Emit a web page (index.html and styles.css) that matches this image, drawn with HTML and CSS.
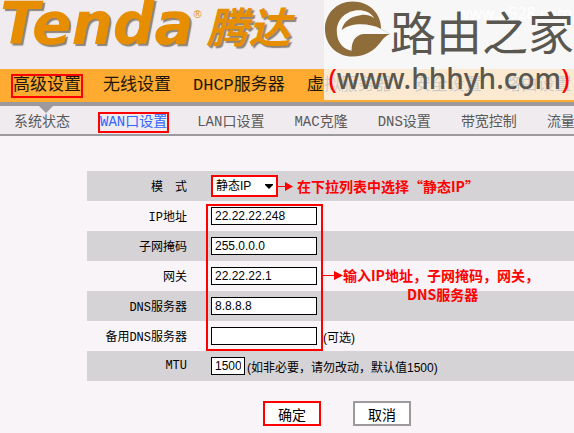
FILE: index.html
```html
<!DOCTYPE html>
<html lang="zh-CN">
<head>
  <meta charset="UTF-8">
  <meta name="viewport" content="width=device-width, initial-scale=1.0">
  <title>Tenda 腾达 - WAN口设置</title>
  <link rel="stylesheet" href="styles.css">
</head>
<body>
  <header class="header">
    <span class="logo">Tenda</span>
    <span class="logo-reg">®</span>
    <span class="logo-cn">腾达</span>
  </header>

  <nav class="main-nav">
    <a href="#" class="current">高级设置</a>
    <a href="#">无线设置</a>
    <a href="#">DHCP服务器</a>
    <a href="#">虚拟服务器</a>
    <a href="#">安全设置</a>
    <a href="#">路由设置</a>
  </nav>

  <nav class="sub-nav">
    <a href="#">系统状态</a>
    <a href="#" class="current">WAN口设置</a>
    <a href="#">LAN口设置</a>
    <a href="#">MAC克隆</a>
    <a href="#">DNS设置</a>
    <a href="#">带宽控制</a>
    <a href="#">流量</a>
  </nav>

  <form class="wan-form">
    <div class="row shaded">
      <label for="mode">模　式</label>
      <div class="select-box">
        <select id="mode" name="mode">
          <option selected>静态IP</option>
          <option>动态IP</option>
          <option>PPPoE</option>
        </select>
        <svg class="caret" width="8" height="5" viewBox="0 0 8 5"><path d="M0 0h8v1L4 5 0 1z"/></svg>
      </div>
      <div class="tip mode-tip">
        <svg width="15" height="9" viewBox="0 0 15 9"><path d="M0 4h7V0l8 4.5L7 9V5H0z"/></svg>
        <span>在下拉列表中选择“静态IP”</span>
      </div>
    </div>

    <div class="address">
      <div class="row">
        <label for="ip">IP地址</label>
        <input type="text" id="ip" name="ip" value="22.22.22.248">
      </div>
      <div class="row shaded">
        <label for="mask">子网掩码</label>
        <input type="text" id="mask" name="mask" value="255.0.0.0">
      </div>
      <div class="row">
        <label for="gateway">网关</label>
        <input type="text" id="gateway" name="gateway" value="22.22.22.1">
      </div>
      <div class="row shaded">
        <label for="dns1">DNS服务器</label>
        <input type="text" id="dns1" name="dns1" value="8.8.8.8">
      </div>
      <div class="row">
        <label for="dns2">备用DNS服务器</label>
        <input type="text" id="dns2" name="dns2">
        <span class="note optional">(可选)</span>
      </div>
      <div class="frame"></div>
      <div class="tip address-tip">
        <svg width="20" height="9" viewBox="0 0 20 9"><path d="M0 4h11V0l9 4.5L11 9V5H0z"/></svg>
        <span>输入IP地址，子网掩码，网关，<br><span class="second-line">DNS服务器</span></span>
      </div>
    </div>

    <div class="row shaded">
      <label for="mtu">MTU</label>
      <input type="text" id="mtu" name="mtu" class="short" value="1500">
      <span class="note">(如非必要，请勿改动，默认值1500)</span>
    </div>

    <div class="buttons">
      <button type="submit" class="ok">确定</button>
      <button type="reset">取消</button>
    </div>
  </form>

  <div class="watermark">
    <span class="ghost">www.it528.com</span>
    <div class="brand">
      <svg width="67" height="58" viewBox="0 0 67 58">
        <path fill="#8f6d3b" d="M58 29C58 12 45 1 29 1 13 1 1 13 1 29s12 28 28 28c13 0 22-6 28-14 3-4 5-7 10-9z"/>
        <path fill="#fafafa" d="M28 51C18 49 13 41 13 31 13 19 23 10 35 10c7 0 12 2 16 8-5-3-9-4-14-3-11 1-18 8-19 15 8-7 27-8 40-1l9 5H40c-8 1-12 7-12 17z"/>
      </svg>
      <span>路由之家</span>
    </div>
    <div class="site"><b>(</b>www.hhhyh.com<b>)</b></div>
  </div>
</body>
</html>
```

FILE: styles.css
```css
* {
  box-sizing: border-box;
}
body {
  margin: 0;
  position: relative;
  overflow-x: hidden;
  background-color: #f8f4f8;
  color: #000;
  font: 12px "Liberation Mono", "Noto Sans CJK SC", monospace;
}
a {
  text-decoration: none;
}

/* logo */
.header {
  display: flex;
  height: 69px;
  background-color: #efebef;
  color: #e78e00;
  text-shadow: 2px 2px 1px #8c8478;
}
.logo {
  font: italic bold 58px/48px "DejaVu Sans", sans-serif;
}
.logo-reg {
  font: 11px/28px "Liberation Sans", sans-serif;
  text-shadow: none;
}
.logo-cn {
  margin-left: 5px;
  font: italic bold 42px/50px "Noto Sans CJK SC", sans-serif;
}

/* navigation */
.main-nav,
.sub-nav {
  display: flex;
  align-items: center;
  white-space: nowrap;
  overflow: hidden;
}
.main-nav {
  gap: 22px;
  height: 37px;
  padding-left: 13px;
  background-color: #ffaa31;
  border-bottom: 4px solid #9c9a9c;
  font-size: 17px;
}
.main-nav a {
  color: #221808;
  line-height: 20px;
}
.main-nav .current,
.sub-nav .current {
  outline: 2px solid #f00;
}
.sub-nav {
  position: relative;
  gap: 30px;
  height: 30px;
  padding: 4px 0 0 14px;
  background-color: #efebef;
  border-bottom: 2px solid #9c9a9c;
  font-size: 14px;
}
.sub-nav::before {
  content: "";
  position: absolute;
  left: 39px;
  top: 0;
  border: 7px solid transparent;
  border-top-color: #9c9a9c;
  border-bottom: 0;
}
.sub-nav a {
  color: #5a595a;
  line-height: 17px;
}
.sub-nav .current {
  color: #3165ff;
}

/* form */
.wan-form {
  padding: 35px 0 8px 87px;
}
.row {
  display: flex;
  align-items: center;
  height: 30px;
}
.shaded {
  background-color: #d6d3d6;
}
.row label {
  width: 100px;
  margin-right: 24px;
  text-align: right;
}
input,
select {
  width: 106px;
  height: 18px;
  padding: 0 3px;
  border: 1px solid #000;
  border-radius: 0;
  background-color: #fff;
  color: #000;
  font: 12px "Liberation Sans", "Noto Sans CJK SC", sans-serif;
}
.short {
  width: 34px;
}
.note {
  margin-left: 2px;
  font-family: "Liberation Sans", "Noto Sans CJK SC", sans-serif;
}
.optional {
  margin-left: 6px;
}
.select-box {
  position: relative;
}
select {
  display: block;
  width: 67px;
  height: 22px;
  border: 2px solid #f00;
  appearance: none;
}
.caret {
  position: absolute;
  right: 5px;
  top: 9px;
}

/* red hints */
.address {
  position: relative;
}
.frame {
  position: absolute;
  left: 119px;
  top: 3px;
  width: 117px;
  height: 147px;
  border: 2px solid #f00;
  pointer-events: none;
}
.tip {
  display: flex;
  color: #f00;
  fill: #f00;
  font: bold 14px/19px "Noto Sans CJK SC", sans-serif;
  white-space: nowrap;
}
.tip svg {
  flex: none;
  margin-top: 5px;
}
.mode-tip {
  gap: 4px;
}
.address-tip {
  position: absolute;
  left: 236px;
  top: 65px;
}
.second-line {
  margin-left: 64px;
}

.buttons {
  display: flex;
  gap: 32px;
  padding: 20px 0 0 176px;
}
button {
  width: 58px;
  height: 25px;
  padding: 0;
  border: 2px solid #9c9a9c;
  background-color: #fff;
  color: #000;
  font: 14px/20px "Noto Sans CJK SC", sans-serif;
}
.ok {
  border-color: #f00;
}

/* site mark over the top right corner */
.watermark {
  position: absolute;
  top: 0;
  right: 0;
  width: 250px;
  height: 100px;
  background-color: rgba(250, 250, 250, 0.8);
  color: #595750;
  white-space: nowrap;
}
.ghost {
  position: absolute;
  right: 2px;
  top: 2px;
  color: #fff;
  font: 16px "Open Sans", sans-serif;
}
.brand {
  position: relative;
  display: flex;
  height: 62px;
  font: 46px/60px "Noto Sans CJK SC", sans-serif;
}
.site {
  font: 500 28px/32px "Noto Sans", sans-serif;
  text-align: center;
}
.site b {
  color: #f00;
  font-weight: normal;
}
```
